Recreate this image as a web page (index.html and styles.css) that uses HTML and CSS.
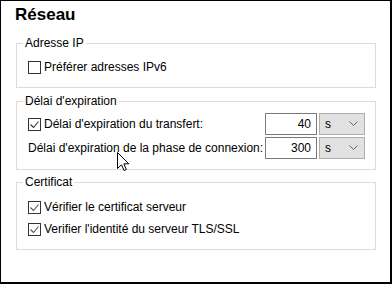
FILE: index.html
```html
<!DOCTYPE html>
<html lang="fr">
<head>
    <meta charset="UTF-8">
    <title>Réseau</title>
    <link rel="stylesheet" href="styles.css">
</head>
<body>
    <div class="panel">
        <h1>Réseau</h1>

        <fieldset class="group group-ip">
            <legend>Adresse IP</legend>
            <label class="row">
                <span class="box"></span>
                <span>Préférer adresses IPv6</span>
            </label>
        </fieldset>

        <fieldset class="group group-timeout">
            <legend>Délai d'expiration</legend>
            <div class="row field">
                <label class="check">
                    <span class="box checked">
                        <svg width="11" height="11" viewBox="0 0 11 11"><path d="M1.5 5.5 L4.5 8.5 L9.5 2.5" fill="none" stroke="#333" stroke-width="1.1"/></svg>
                    </span>
                    <span>Délai d'expiration du transfert:</span>
                </label>
                <div class="num">40</div>
                <div class="unit"><span>s</span><svg width="9" height="6" viewBox="0 0 9 6"><path d="M0.5 0.5 L4.5 4.5 L8.5 0.5" fill="none" stroke="#666" stroke-width="1"/></svg></div>
            </div>
            <div class="row field">
                <span class="plain">Délai d'expiration de la phase de connexion:</span>
                <div class="num">300</div>
                <div class="unit"><span>s</span><svg width="9" height="6" viewBox="0 0 9 6"><path d="M0.5 0.5 L4.5 4.5 L8.5 0.5" fill="none" stroke="#666" stroke-width="1"/></svg></div>
            </div>
        </fieldset>

        <fieldset class="group group-cert">
            <legend>Certificat</legend>
            <label class="row">
                <span class="box checked">
                    <svg width="11" height="11" viewBox="0 0 11 11"><path d="M1.5 5.5 L4.5 8.5 L9.5 2.5" fill="none" stroke="#555" stroke-width="1.1"/></svg>
                </span>
                <span>Vérifier le certificat serveur</span>
            </label>
            <label class="row">
                <span class="box checked">
                    <svg width="11" height="11" viewBox="0 0 11 11"><path d="M1.5 5.5 L4.5 8.5 L9.5 2.5" fill="none" stroke="#555" stroke-width="1.1"/></svg>
                </span>
                <span>Verifier l'identité du serveur TLS/SSL</span>
            </label>
        </fieldset>

        <svg class="cursor" width="13" height="20" viewBox="0 0 13 20">
            <path d="M0.5 0.5 L0.5 16.5 L4.5 12.8 L7 18.5 L9.3 17.5 L6.9 11.8 L11.8 11.8 Z" fill="#fff" stroke="#000" stroke-width="1"/>
        </svg>
    </div>
</body>
</html>
```

FILE: styles.css
```css
*, *:before, *:after {
    margin: 0;
    padding: 0;
    box-sizing: border-box;
}
body {
    font-family: "Liberation Sans", Arial, sans-serif;
    font-size: 12px;
    color: #000;
    background: #fff;
}
.panel {
    position: relative;
    width: 392px;
    height: 284px;
    border: 1px solid #000;
    border-right-width: 2px;
    border-bottom-width: 2px;
    padding: 0 14px 0 15px;
}
h1 {
    font-size: 17px;
    font-weight: bold;
    line-height: 20px;
    margin: 4px 0 0 -1px;
    height: 30px;
}
.group {
    border: 1px solid #dcdcdc;
    padding: 0 10px 0 11px;
}
legend {
    line-height: 16px;
    padding: 0 2px;
    margin-left: -5px;
}
.group-ip {
    padding-top: 5px;
    padding-bottom: 9px;
}
.group-timeout {
    margin-top: 5px;
    padding-top: 4px;
    padding-bottom: 10px;
}
.group-cert {
    margin-top: 4px;
    padding-top: 6px;
    padding-bottom: 9px;
}
.row {
    display: flex;
    align-items: center;
    height: 22px;
    white-space: nowrap;
}
.field + .field {
    margin-top: 2px;
}
.check {
    display: flex;
    align-items: center;
}
.box {
    display: flex;
    align-items: center;
    justify-content: center;
    width: 13px;
    height: 13px;
    border: 1px solid #333;
    background: #fff;
    margin-right: 3px;
    flex-shrink: 0;
}
.field .check,
.field .plain {
    flex: 1;
}
.num {
    width: 52px;
    height: 22px;
    border: 1px solid #7a7a7a;
    text-align: right;
    padding-right: 5px;
    line-height: 20px;
}
.unit {
    display: flex;
    align-items: center;
    justify-content: space-between;
    width: 46px;
    height: 22px;
    margin-left: 2px;
    background: #e1e1e1;
    border: 1px solid #adadad;
    padding: 0 6px 0 5px;
}
.cursor {
    position: absolute;
    left: 116px;
    top: 151px;
}
```
